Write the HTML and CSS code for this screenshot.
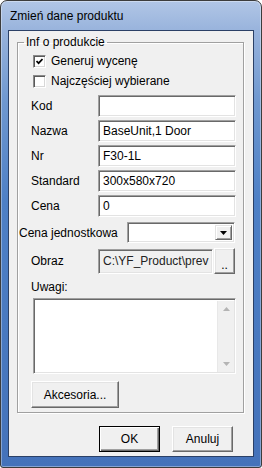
FILE: index.html
```html
<!DOCTYPE html>
<html lang="pl">
<head>
  <meta charset="UTF-8" />
  <meta name="viewport" content="width=device-width, initial-scale=1.0"/>
  <title>Zmień dane produktu</title>
  <link rel="stylesheet" href="styles.css">
</head>
<body>
  <div class="window">
    <div class="titlebar">Zmień dane produktu</div>
    <div class="client">
      <fieldset class="group">
        <legend>Inf o produkcie</legend>
        <label class="check-row first">
          <span class="checkbox">
            <svg width="7" height="7" viewBox="0 0 7 7"><polyline points="0.5,3 2.6,5.2 6.5,1" fill="none" stroke="#000" stroke-width="1.7"/></svg>
          </span>
          Generuj wycenę
        </label>
        <label class="check-row">
          <span class="checkbox"></span>
          Najczęściej wybierane
        </label>

        <div class="field-row first">
          <span class="field-label">Kod</span>
          <div class="textbox"></div>
        </div>
        <div class="field-row">
          <span class="field-label">Nazwa</span>
          <div class="textbox">BaseUnit,1 Door</div>
        </div>
        <div class="field-row">
          <span class="field-label">Nr</span>
          <div class="textbox">F30-1L</div>
        </div>
        <div class="field-row">
          <span class="field-label">Standard</span>
          <div class="textbox">300x580x720</div>
        </div>
        <div class="field-row">
          <span class="field-label">Cena</span>
          <div class="textbox">0</div>
        </div>

        <div class="field-row combo-row">
          <span class="field-label">Cena jednostkowa</span>
          <div class="combo">
            <span class="combo-value"></span>
            <span class="combo-btn">
              <svg width="7" height="4" viewBox="0 0 7 4"><polygon points="0,0 7,0 3.5,4" fill="#000"/></svg>
            </span>
          </div>
        </div>

        <div class="field-row image-row">
          <span class="field-label">Obraz</span>
          <div class="textbox readonly">C:\YF_Product\prev</div>
          <button class="btn browse">..</button>
        </div>

        <div class="notes-label">Uwagi:</div>
        <div class="notes">
          <div class="notes-area"></div>
          <div class="scrollbar">
            <svg width="7" height="4" viewBox="0 0 7 4"><polygon points="0,4 7,4 3.5,0" fill="#b4b4b4"/></svg>
            <svg width="7" height="4" viewBox="0 0 7 4"><polygon points="0,0 7,0 3.5,4" fill="#b4b4b4"/></svg>
          </div>
        </div>

        <button class="btn accessories">Akcesoria...</button>
      </fieldset>

      <div class="dialog-buttons">
        <button class="btn default">OK</button>
        <button class="btn">Anuluj</button>
      </div>
    </div>
  </div>
</body>
</html>
```

FILE: styles.css
```css
/* General Reset */
* {
  box-sizing: border-box;
}

body {
  margin: 0;
  background: #ffffff;
  font-family: "Liberation Sans", Arial, sans-serif;
  font-size: 12px;
  color: #000;
}

/* Window frame */
.window {
  width: 262px;
  height: 468px;
  border: 1px solid #3c3c3c;
  border-radius: 7px 7px 3px 3px;
  background: linear-gradient(to bottom, #b1c6e6 0, #98b3dc 30px, #6f98d0 100px, #4e80c6 200px, #4472ba 100%);
  box-shadow: inset 0 0 0 1px rgba(255, 255, 255, 0.35);
  padding: 0 7px 10px;
  display: flex;
  flex-direction: column;
}

.titlebar {
  height: 29px;
  padding-left: 2px;
  display: flex;
  align-items: center;
  font-size: 12px;
  color: #000;
}

.client {
  flex: 1;
  background: #f0f0f0;
  border: 1px solid #2b4066;
  display: flex;
  flex-direction: column;
}

/* Group box */
.group {
  margin: 4px 9px 0 8px;
  padding: 0 0 4px 0;
  border: 1px solid #a0a0a0;
  box-shadow: inset 1px 1px 0 #ffffff, 1px 1px 0 #ffffff;
  min-width: 0;
}

.group legend {
  margin-left: 6px;
  padding: 0 2px;
  line-height: 14px;
  font-size: 12px;
}

/* Checkboxes */
.check-row {
  display: flex;
  align-items: center;
  gap: 5px;
  height: 20px;
  margin-left: 15px;
}

.check-row.first {
  margin-top: 2px;
}

.checkbox {
  width: 13px;
  height: 13px;
  background: #ffffff;
  border: 1px solid;
  border-color: #8a8a8a #ffffff #ffffff #8a8a8a;
  box-shadow: inset 1px 1px 0 #5a5a5a, inset -1px -1px 0 #d8d8d8;
  display: flex;
  align-items: center;
  justify-content: center;
}

/* Label + input rows */
.field-row {
  display: flex;
  align-items: center;
  height: 22px;
  margin-top: 3px;
  padding-left: 13px;
}

.field-row.first {
  margin-top: 4px;
}

.field-label {
  width: 67px;
  flex-shrink: 0;
  white-space: nowrap;
}

.textbox {
  width: 138px;
  height: 22px;
  background: #ffffff;
  border: 1px solid;
  border-color: #a0a0a0 #ffffff #ffffff #a0a0a0;
  box-shadow: inset 1px 1px 0 #696969, inset -1px -1px 0 #e3e3e3;
  padding: 0 4px;
  line-height: 20px;
  white-space: nowrap;
  overflow: hidden;
}

.textbox.readonly {
  background: #f0f0f0;
  color: #222;
}

.combo-row {
  margin-top: 5px;
  height: 21px;
  padding-left: 1px;
}

.combo-row .field-label {
  width: 108px;
}

.combo {
  width: 108px;
  height: 21px;
  background: #ffffff;
  border: 1px solid;
  border-color: #a0a0a0 #ffffff #ffffff #a0a0a0;
  box-shadow: inset 1px 1px 0 #696969, inset -1px -1px 0 #e3e3e3;
  display: flex;
  padding: 2px;
}

.combo-value {
  flex: 1;
}

.combo-btn {
  width: 17px;
  background: #f0f0f0;
  border: 1px solid;
  border-color: #e3e3e3 #696969 #696969 #e3e3e3;
  box-shadow: inset 1px 1px 0 #ffffff, inset -1px -1px 0 #a0a0a0;
  display: flex;
  align-items: center;
  justify-content: center;
}

.image-row {
  margin-top: 5px;
  height: 26px;
}

.image-row .textbox {
  width: 115px;
  height: 25px;
  line-height: 23px;
}

/* Buttons */
.btn {
  font-family: inherit;
  font-size: 12px;
  color: #000;
  background: #f0f0f0;
  border: 1px solid;
  border-color: #ffffff #696969 #696969 #ffffff;
  box-shadow: inset -1px -1px 0 #a0a0a0, inset 1px 1px 0 #e3e3e3;
  padding: 0;
  margin: 0;
}

.btn.browse {
  width: 21px;
  height: 26px;
  margin-left: 1px;
  padding-top: 8px;
  line-height: 12px;
}

.btn.default {
  border: 1px solid #000;
  box-shadow: inset 1px 1px 0 #ffffff, inset -1px -1px 0 #696969, inset -2px -2px 0 #a0a0a0;
}

.btn.accessories {
  display: block;
  width: 88px;
  height: 27px;
  margin: 7px 0 0 13px;
}

/* Notes */
.notes-label {
  height: 20px;
  line-height: 20px;
  margin-top: 3px;
  padding-left: 13px;
}

.notes {
  width: 203px;
  height: 76px;
  margin: 1px 0 0 15px;
  background: #ffffff;
  border: 1px solid;
  border-color: #a0a0a0 #ffffff #ffffff #a0a0a0;
  box-shadow: inset 1px 1px 0 #696969, inset -1px -1px 0 #e3e3e3;
  display: flex;
  padding: 2px 1px 1px 2px;
}

.notes-area {
  flex: 1;
}

.scrollbar {
  width: 17px;
  background: #f0f0f0;
  border-left: 1px solid #e8e8e8;
  display: flex;
  flex-direction: column;
  justify-content: space-between;
  align-items: center;
  padding: 6px 0 6px;
}

/* Dialog buttons */
.dialog-buttons {
  display: flex;
  justify-content: flex-end;
  gap: 12px;
  margin-top: 13px;
  padding-right: 20px;
}

.dialog-buttons .btn {
  width: 61px;
  height: 26px;
}
```
